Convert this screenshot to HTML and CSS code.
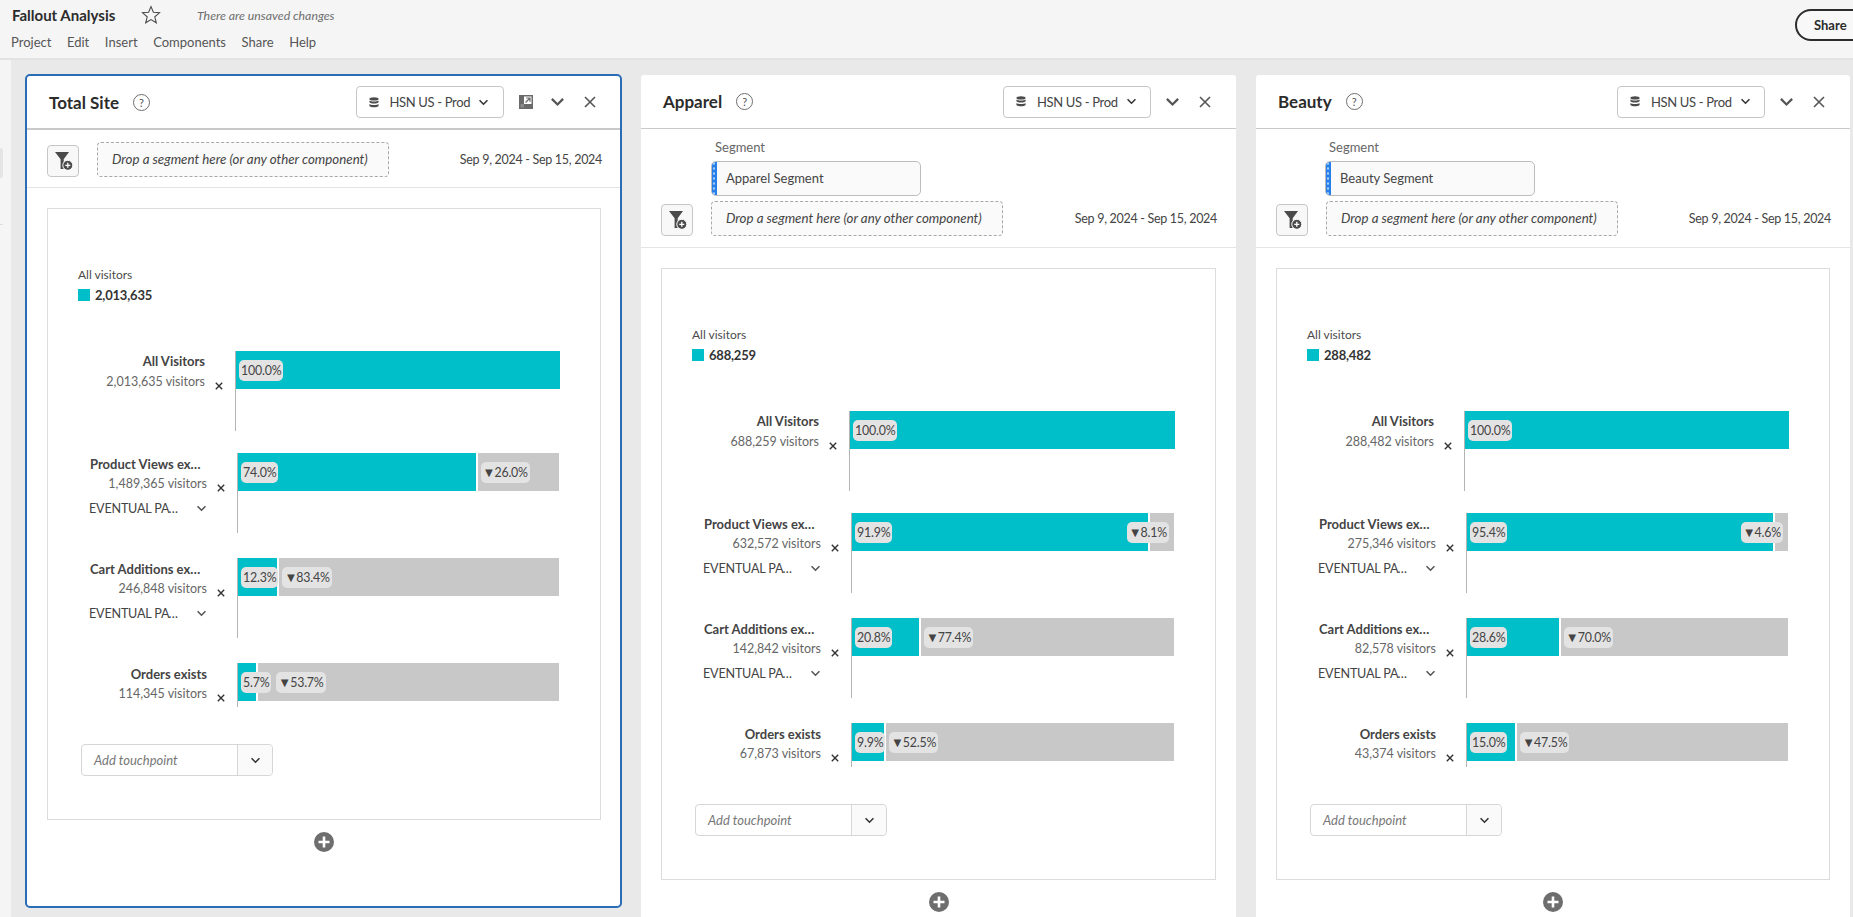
FILE: index.html
```html
<!DOCTYPE html>
<html lang="en">
<head>
<meta charset="utf-8">
<title>Fallout Analysis</title>
<link rel="stylesheet" href="styles.css">
</head>
<body>
<svg class="defs" width="0" height="0" aria-hidden="true">
  <symbol id="i-chev" viewBox="0 0 12 8"><path d="M1.5 1.5 6 6l4.5-4.5" fill="none" stroke="currentColor" stroke-width="1.8"/></symbol>
  <symbol id="i-close" viewBox="0 0 12 12"><path d="M1 1l10 10M11 1 1 11" fill="none" stroke="currentColor" stroke-width="1.6"/></symbol>
  <symbol id="i-x" viewBox="0 0 8 8"><path d="M.8.8l6.4 6.4M7.2.8.8 7.2" fill="none" stroke="currentColor" stroke-width="1.4"/></symbol>
  <symbol id="i-db" viewBox="0 0 10 11"><ellipse cx="5" cy="1.9" rx="4.6" ry="1.7"/><path d="M.4 3.6c1 1.3 8.2 1.3 9.2 0v1.7c-1 1.6-8.2 1.6-9.2 0zM.4 7c1 1.3 8.2 1.3 9.2 0v2c-1 1.8-8.2 1.8-9.2 0z"/></symbol>
  <symbol id="i-filter" viewBox="0 0 18 20"><path d="M0 1h14L8.7 8.2V18H5.6V8.2z" fill="#4b4b4b"/><circle cx="12.8" cy="14.3" r="5" fill="#4b4b4b" stroke="#fff" stroke-width="1"/><path d="M12.8 11.8v5M10.3 14.3h5" stroke="#fff" stroke-width="1.3"/></symbol>
  <symbol id="i-plus" viewBox="0 0 20 20"><circle cx="10" cy="10" r="10" fill="#6e6e6e"/><path d="M10 4.5v11M4.5 10h11" stroke="#fff" stroke-width="2.6"/></symbol>
  <symbol id="i-full" viewBox="0 0 14 14"><path d="M0 0h14v14H0z" fill="#6a6a6a"/><path d="M5 1.5h7.5V9H5z" fill="#fff"/><path d="M1.5 9H5v3.5H1.5z" fill="#8a8a8a"/><path d="M6.5 7.5l4-4M7.2 3h3.8v3.8" stroke="#6a6a6a" stroke-width="1.2" fill="none"/></symbol>
</svg>

<header class="topbar">
  <div class="topbar-main">
    <div class="title-row">
      <h1 class="app-title">Fallout Analysis</h1>
      <svg class="star" viewBox="0 0 20 20"><path d="M10 1.6l2.4 5.7 6.1.5-4.7 4 1.5 6-5.3-3.2-5.3 3.2 1.5-6-4.7-4 6.1-.5z" fill="none" stroke="#4b4b4b" stroke-width="1.1"/></svg>
      <span class="unsaved">There are unsaved changes</span>
    </div>
    <nav class="menu">
      <span>Project</span><span>Edit</span><span>Insert</span><span>Components</span><span>Share</span><span>Help</span>
    </nav>
  </div>
  <button class="share">Share</button>
</header>

<div class="body-row">
  <aside class="rail"><div class="rail-tab"></div><div class="rail-line"></div></aside>
  <main class="workspace">

    <section class="panel panel-active">
      <div class="panel-head">
        <h2 class="panel-title">Total Site</h2>
        <span class="help">?</span>
        <div class="suite"><svg class="db"><use href="#i-db"/></svg><span>HSN US - Prod</span><svg class="suite-chev"><use href="#i-chev"/></svg></div>
        <svg class="full"><use href="#i-full"/></svg>
        <svg class="head-chev"><use href="#i-chev"/></svg>
        <svg class="head-close"><use href="#i-close"/></svg>
      </div>
      <div class="panel-tools">
        <div class="tool-row">
          <button class="filter-btn"><svg><use href="#i-filter"/></svg></button>
          <div class="drop">Drop a segment here (or any other component)</div>
          <span class="date">Sep 9, 2024 - Sep 15, 2024</span>
        </div>
      </div>
      <div class="chart">
        <div class="legend"><div class="legend-label">All visitors</div><div class="legend-val"><i class="swatch"></i>2,013,635</div></div>
        <div class="step step-first">
          <div class="step-label"><div class="step-name">All Visitors</div><div class="step-count">2,013,635 visitors</div></div>
          <svg class="step-x"><use href="#i-x"/></svg>
          <div class="step-track"><div class="bar"><div class="seg-on" style="width:100%"><span class="pill">100.0%</span></div></div></div>
        </div>
        <div class="step">
          <div class="step-label"><div class="step-name">Product Views exists</div><div class="step-count">1,489,365 visitors</div><div class="step-path"><span>EVENTUAL PATH</span><svg><use href="#i-chev"/></svg></div></div>
          <svg class="step-x"><use href="#i-x"/></svg>
          <div class="step-track"><div class="bar"><div class="seg-on" style="width:74%"><span class="pill">74.0%</span></div><div class="seg-off"><span class="pill"><span class="tri">▼</span>26.0%</span></div></div></div>
        </div>
        <div class="step">
          <div class="step-label"><div class="step-name">Cart Additions exists</div><div class="step-count">246,848 visitors</div><div class="step-path"><span>EVENTUAL PATH</span><svg><use href="#i-chev"/></svg></div></div>
          <svg class="step-x"><use href="#i-x"/></svg>
          <div class="step-track"><div class="bar"><div class="seg-on" style="width:12.3%"><span class="pill">12.3%</span></div><div class="seg-off"><span class="pill"><span class="tri">▼</span>83.4%</span></div></div></div>
        </div>
        <div class="step step-last">
          <div class="step-label"><div class="step-name">Orders exists</div><div class="step-count">114,345 visitors</div></div>
          <svg class="step-x"><use href="#i-x"/></svg>
          <div class="step-track"><div class="bar"><div class="seg-on" style="width:5.7%"><span class="pill">5.7%</span></div><div class="seg-off seg-pushed"><span class="pill"><span class="tri">▼</span>53.7%</span></div></div></div>
        </div>
        <div class="touch"><span class="touch-input">Add touchpoint</span><span class="touch-btn"><svg><use href="#i-chev"/></svg></span></div>
      </div>
      <svg class="add"><use href="#i-plus"/></svg>
    </section>

    <section class="panel panel-mid">
      <div class="panel-head">
        <h2 class="panel-title">Apparel</h2>
        <span class="help">?</span>
        <div class="suite"><svg class="db"><use href="#i-db"/></svg><span>HSN US - Prod</span><svg class="suite-chev"><use href="#i-chev"/></svg></div>
        <svg class="head-chev"><use href="#i-chev"/></svg>
        <svg class="head-close"><use href="#i-close"/></svg>
      </div>
      <div class="panel-tools">
        <div class="seg-block">
          <div class="seg-label">Segment</div>
          <div class="seg-chip"><i class="grip"></i>Apparel Segment</div>
        </div>
        <div class="tool-row">
          <button class="filter-btn"><svg><use href="#i-filter"/></svg></button>
          <div class="drop">Drop a segment here (or any other component)</div>
          <span class="date">Sep 9, 2024 - Sep 15, 2024</span>
        </div>
      </div>
      <div class="chart">
        <div class="legend"><div class="legend-label">All visitors</div><div class="legend-val"><i class="swatch"></i>688,259</div></div>
        <div class="step step-first">
          <div class="step-label"><div class="step-name">All Visitors</div><div class="step-count">688,259 visitors</div></div>
          <svg class="step-x"><use href="#i-x"/></svg>
          <div class="step-track"><div class="bar"><div class="seg-on" style="width:100%"><span class="pill">100.0%</span></div></div></div>
        </div>
        <div class="step">
          <div class="step-label"><div class="step-name">Product Views exists</div><div class="step-count">632,572 visitors</div><div class="step-path"><span>EVENTUAL PATH</span><svg><use href="#i-chev"/></svg></div></div>
          <svg class="step-x"><use href="#i-x"/></svg>
          <div class="step-track"><div class="bar"><div class="seg-on" style="width:91.9%"><span class="pill">91.9%</span></div><div class="seg-off seg-narrow"><span class="pill"><span class="tri">▼</span>8.1%</span></div></div></div>
        </div>
        <div class="step">
          <div class="step-label"><div class="step-name">Cart Additions exists</div><div class="step-count">142,842 visitors</div><div class="step-path"><span>EVENTUAL PATH</span><svg><use href="#i-chev"/></svg></div></div>
          <svg class="step-x"><use href="#i-x"/></svg>
          <div class="step-track"><div class="bar"><div class="seg-on" style="width:20.8%"><span class="pill">20.8%</span></div><div class="seg-off"><span class="pill"><span class="tri">▼</span>77.4%</span></div></div></div>
        </div>
        <div class="step step-last">
          <div class="step-label"><div class="step-name">Orders exists</div><div class="step-count">67,873 visitors</div></div>
          <svg class="step-x"><use href="#i-x"/></svg>
          <div class="step-track"><div class="bar"><div class="seg-on" style="width:9.9%"><span class="pill">9.9%</span></div><div class="seg-off"><span class="pill"><span class="tri">▼</span>52.5%</span></div></div></div>
        </div>
        <div class="touch"><span class="touch-input">Add touchpoint</span><span class="touch-btn"><svg><use href="#i-chev"/></svg></span></div>
      </div>
      <svg class="add"><use href="#i-plus"/></svg>
    </section>

    <section class="panel panel-end">
      <div class="panel-head">
        <h2 class="panel-title">Beauty</h2>
        <span class="help">?</span>
        <div class="suite"><svg class="db"><use href="#i-db"/></svg><span>HSN US - Prod</span><svg class="suite-chev"><use href="#i-chev"/></svg></div>
        <svg class="head-chev"><use href="#i-chev"/></svg>
        <svg class="head-close"><use href="#i-close"/></svg>
      </div>
      <div class="panel-tools">
        <div class="seg-block">
          <div class="seg-label">Segment</div>
          <div class="seg-chip"><i class="grip"></i>Beauty Segment</div>
        </div>
        <div class="tool-row">
          <button class="filter-btn"><svg><use href="#i-filter"/></svg></button>
          <div class="drop">Drop a segment here (or any other component)</div>
          <span class="date">Sep 9, 2024 - Sep 15, 2024</span>
        </div>
      </div>
      <div class="chart">
        <div class="legend"><div class="legend-label">All visitors</div><div class="legend-val"><i class="swatch"></i>288,482</div></div>
        <div class="step step-first">
          <div class="step-label"><div class="step-name">All Visitors</div><div class="step-count">288,482 visitors</div></div>
          <svg class="step-x"><use href="#i-x"/></svg>
          <div class="step-track"><div class="bar"><div class="seg-on" style="width:100%"><span class="pill">100.0%</span></div></div></div>
        </div>
        <div class="step">
          <div class="step-label"><div class="step-name">Product Views exists</div><div class="step-count">275,346 visitors</div><div class="step-path"><span>EVENTUAL PATH</span><svg><use href="#i-chev"/></svg></div></div>
          <svg class="step-x"><use href="#i-x"/></svg>
          <div class="step-track"><div class="bar"><div class="seg-on" style="width:95.4%"><span class="pill">95.4%</span></div><div class="seg-off seg-narrow"><span class="pill"><span class="tri">▼</span>4.6%</span></div></div></div>
        </div>
        <div class="step">
          <div class="step-label"><div class="step-name">Cart Additions exists</div><div class="step-count">82,578 visitors</div><div class="step-path"><span>EVENTUAL PATH</span><svg><use href="#i-chev"/></svg></div></div>
          <svg class="step-x"><use href="#i-x"/></svg>
          <div class="step-track"><div class="bar"><div class="seg-on" style="width:28.6%"><span class="pill">28.6%</span></div><div class="seg-off"><span class="pill"><span class="tri">▼</span>70.0%</span></div></div></div>
        </div>
        <div class="step step-last">
          <div class="step-label"><div class="step-name">Orders exists</div><div class="step-count">43,374 visitors</div></div>
          <svg class="step-x"><use href="#i-x"/></svg>
          <div class="step-track"><div class="bar"><div class="seg-on" style="width:15%"><span class="pill">15.0%</span></div><div class="seg-off"><span class="pill"><span class="tri">▼</span>47.5%</span></div></div></div>
        </div>
        <div class="touch"><span class="touch-input">Add touchpoint</span><span class="touch-btn"><svg><use href="#i-chev"/></svg></span></div>
      </div>
      <svg class="add"><use href="#i-plus"/></svg>
    </section>

  </main>
</div>
</body>
</html>
```
FILE: styles.css
```css
* { box-sizing: border-box; }
html, body { margin: 0; height: 917px; overflow: hidden; }
body {
  font-family: "Lato", "Open Sans", sans-serif;
  font-size: 13px;
  color: #4b4b4b;
  background: #e9e9e9;
}
.defs { position: absolute; }
h1, h2 { margin: 0; }

/* top bar */
.topbar {
  height: 60px;
  background: #f5f5f5;
  border-bottom: 2px solid #e3e3e3;
  display: flex;
  justify-content: space-between;
  padding-left: 12px;
  overflow: hidden;
}
.title-row { display: flex; align-items: center; height: 30px; margin-bottom: 2px; }
.app-title { font-size: 15px; font-weight: 700; color: #2c2c2c; width: 129px; white-space: nowrap; }
.star { width: 20px; height: 20px; }
.unsaved { margin-left: 36px; font-size: 12.3px; font-style: italic; color: #6e6e6e; }
.menu { display: flex; gap: 15.6px; height: 20px; line-height: 20px; margin-left: -1px; color: #555; font-size: 13px; }
.share {
  flex: none;
  width: 90px;
  height: 32px;
  margin: 9px -32px 0 0;
  padding: 0 0 0 17px;
  border: 2px solid #2c2c2c;
  border-radius: 16px;
  background: #f8f8f8;
  color: #2c2c2c;
  font: 700 13px "Lato", sans-serif;
  text-align: left;
}

/* layout */
.body-row { display: flex; }
.rail { width: 11px; height: 857px; background: #f5f5f5; flex: none; padding-top: 88px; }
.rail-tab { width: 3px; height: 30px; background: #e4e4e4; border-radius: 0 3px 3px 0; }
.rail-line { width: 3px; height: 1px; margin-top: 46px; background: #ddd; }
.workspace { display: flex; align-items: flex-start; gap: 19px; padding: 14px 0 0 14px; }

/* panel */
.panel { background: #fff; border-radius: 3px; padding-bottom: 54px; display: flex; flex-direction: column; flex: none; }
.panel-active { width: 597px; border: 2px solid #2a6db5; border-radius: 5px; }
.panel-mid { width: 595px; margin-top: 1px; }
.panel-end { width: 594px; margin-top: 1px; margin-left: 1px; }
.panel-head {
  height: 54px;
  display: flex;
  align-items: center;
  padding: 0 25px 0 22px;
  border-bottom: 1px solid #c9c9c9;
  flex: none;
}
.panel-active .panel-head { border-bottom-width: 2px; padding: 0 24px 0 22px; }
.panel-title { font-size: 17px; font-weight: 700; color: #2c2c2c; }
.help {
  width: 17px; height: 17px; margin-left: 14px;
  border: 1px solid #6e6e6e; border-radius: 50%;
  font-size: 11px; line-height: 15px; text-align: center; color: #555;
}
.suite {
  margin-left: auto;
  height: 32px; width: 148px;
  display: flex; align-items: center;
  border: 1px solid #c6c6c6; border-radius: 4px;
  padding-left: 12px;
  font-size: 13px; letter-spacing: -.35px; color: #444;
  background: #fff;
}
.db { width: 10px; height: 11px; fill: #4b4b4b; flex: none; margin-right: 11px; }
.suite-chev { width: 11px; height: 7px; color: #333; margin-left: 8px; flex: none; }
.full { width: 14px; height: 14px; margin-left: 15.5px; flex: none; }
.head-chev { width: 15px; height: 10px; margin-left: 14px; color: #555; flex: none; }
.panel-active .head-chev { margin-left: 17px; }
.head-close { width: 12px; height: 12px; margin-left: 19px; color: #555; flex: none; }
.panel-tools { padding: 10px 19px 11px 20px; border-bottom: 1px solid #e4e4e4; flex: none; }
.panel-active .panel-tools { padding: 12px 18px 10px 20px; }
.tool-row { display: flex; align-items: flex-end; }
.filter-btn {
  width: 32px; height: 32px; padding: 0;
  display: flex; align-items: center; justify-content: center;
  border: 1px solid #c6c6c6; border-radius: 4px; background: #f8f8f8;
  flex: none;
}
.filter-btn svg { width: 18px; height: 20px; margin-left: 1px; }
.drop {
  width: 292px; height: 35px; margin-left: 18px;
  border: 1px dashed #a8a8a8; border-radius: 4px;
  background: #fafafa;
  padding-left: 14px; line-height: 33px;
  font-size: 13.3px; font-style: italic; color: #444;
  white-space: nowrap;
}
.date { margin-left: auto; align-self: center; font-size: 12.5px; letter-spacing: -.3px; color: #444; white-space: nowrap; }
.seg-block { margin-left: 50px; margin-bottom: 5px; }
.panel-end .seg-block { margin-left: 49px; }
.seg-label { height: 20px; line-height: 16px; padding-left: 4px; font-size: 13px; color: #666; margin-bottom: 2px; }
.seg-chip {
  width: 210px; height: 35px; position: relative;
  display: flex; align-items: center;
  padding: 0 0 2px 14px; font-size: 13px; color: #444;
  border: 1px solid #bdbdbd; border-radius: 5px; background: #fafafa;
  overflow: hidden;
}
.grip {
  position: absolute; left: -1px; top: -1px; bottom: -1px; width: 6px;
  background: radial-gradient(circle, #a9cdf5 1px, transparent 1.3px) center / 6px 5px #2680eb;
}

/* chart */
.chart {
  margin: 20px 20px 0;
  height: 612px;
  border: 1px solid #dcdcdc;
  padding: 57px 0 0 30px;
  flex: none;
}
.panel-active .chart { margin-right: 19px; }
.legend { height: 85px; }
.legend-label { height: 17px; line-height: 17px; font-size: 12px; color: #4b4b4b; }
.legend-val { display: flex; align-items: center; height: 23px; font-size: 13px; letter-spacing: -.2px; font-weight: 700; color: #333; }
.swatch { width: 12px; height: 12px; background: #00bfc9; margin-right: 5px; }
.step { display: flex; height: 105px; margin-left: 10px; }
.step-first { height: 102px; margin-left: 8px; }
.step-last { height: 44px; }
.step-label { width: 119px; text-align: right; flex: none; }
.step-name { height: 20px; margin-top: 1px; line-height: 20px; font-size: 13px; font-weight: 700; color: #444; overflow: hidden; text-overflow: ellipsis; white-space: nowrap; padding: 0 5px 0 2px; }
.step-first .step-name, .step-last .step-name { padding: 0; }
.step-first .step-name { margin-top: 0; }
.step-count { height: 19px; line-height: 19px; font-size: 12.5px; color: #666; white-space: nowrap; }
.step-first .step-count { margin-top: 1px; }
.step-path { display: flex; align-items: center; justify-content: space-between; height: 20px; margin-top: 5px; padding-left: 1px; font-size: 12.6px; letter-spacing: -.2px; color: #444; text-align: left; }
.step-path span { width: 94px; overflow: hidden; text-overflow: ellipsis; white-space: nowrap; }
.step-path svg { width: 11px; height: 7px; color: #555; flex: none; }
.step-x { width: 8px; height: 8px; margin: 31px 12px 0 10px; color: #333; flex: none; }
.step-track { width: 322px; height: 80px; border-left: 1px solid #b4b4b4; flex: none; }
.step-first .step-track { width: 325px; }
.panel-mid .step-track { width: 323px; }
.panel-mid .step-first .step-track { width: 326px; }
.step-last .step-track { height: 44px; }
.bar { display: flex; height: 38px; }
.seg-on { flex: none; height: 100%; background: #00bfc9; display: flex; align-items: center; padding-left: 3px; position: relative; z-index: 1; }
.seg-off { flex: 1; min-width: 0; margin-left: 2px; height: 100%; background: #c8c8c8; display: flex; align-items: center; padding-left: 3px; }
.seg-pushed { padding-left: 18px; }
.seg-narrow { justify-content: flex-end; padding: 0 5px 0 0; position: relative; z-index: 2; }
.pill { flex: none; height: 21px; line-height: 21px; padding: 0 2px; background: #e3e3e3; border-radius: 5px; font-size: 12.4px; letter-spacing: -.2px; color: #444; white-space: nowrap; }
.tri { font-size: 13px; line-height: 1; letter-spacing: -1px; margin-left: 0; }
.touch { display: flex; width: 192px; height: 32px; margin: 37px 0 0 3px; border: 1px solid #d6d6d6; border-radius: 4px; }
.touch-input { width: 156px; padding-left: 12px; line-height: 30px; font-size: 13px; font-style: italic; color: #777; border-right: 1px solid #d6d6d6; }
.touch-btn { flex: 1; display: flex; align-items: center; justify-content: center; background: #fafafa; border-radius: 0 4px 4px 0; }
.touch-btn svg { width: 11px; height: 7px; color: #333; }
.add { width: 20px; height: 20px; margin: 12px auto 0; flex: none; }
```
